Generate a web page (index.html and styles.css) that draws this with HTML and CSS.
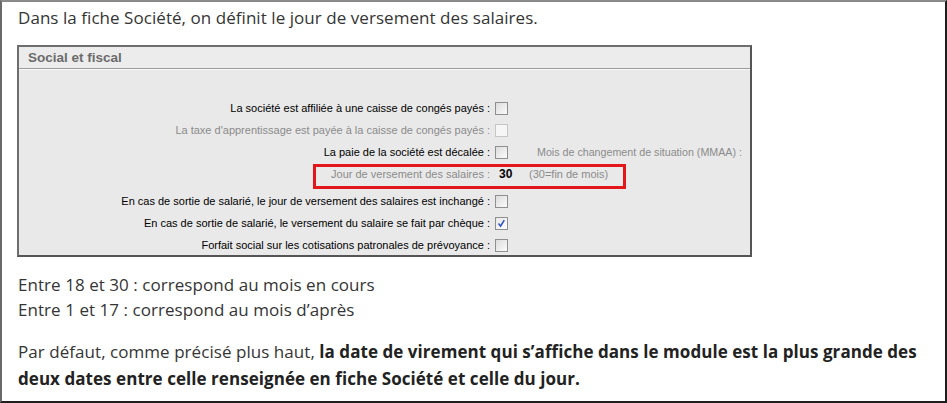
FILE: index.html
```html
<!DOCTYPE html>
<html lang="fr">
<head>
<meta charset="utf-8">
<title>Social et fiscal</title>
<link rel="stylesheet" href="styles.css">
</head>
<body>
<div class="frame">
  <p class="intro">Dans la fiche Société, on définit le jour de versement des salaires.</p>
  <div class="shot">
    <div class="shot-head">Social et fiscal</div>
    <div class="shot-body">
      <div class="row">
        <span class="label">La société est affiliée à une caisse de congés payés :</span>
        <span class="cb"></span>
      </div>
      <div class="row dim">
        <span class="label">La taxe d'apprentissage est payée à la caisse de congés payés :</span>
        <span class="cb cb-dis"></span>
      </div>
      <div class="row">
        <span class="label">La paie de la société est décalée :</span>
        <span class="cb"></span>
        <span class="extra dimtext">Mois de changement de situation (MMAA) :</span>
      </div>
      <div class="row row-pay dim">
        <span class="label">Jour de versement des salaires :</span>
        <span class="value">30</span>
        <span class="hint">(30=fin de mois)</span>
      </div>
      <div class="row">
        <span class="label">En cas de sortie de salarié, le jour de versement des salaires est inchangé :</span>
        <span class="cb"></span>
      </div>
      <div class="row">
        <span class="label">En cas de sortie de salarié, le versement du salaire se fait par chèque :</span>
        <span class="cb cb-on"><svg viewBox="0 0 13 13" width="11" height="11"><path d="M3 6.6 L5.4 9.6 L9.8 2.6" fill="none" stroke="#2b4fc4" stroke-width="1.8"/></svg></span>
      </div>
      <div class="row">
        <span class="label">Forfait social sur les cotisations patronales de prévoyance :</span>
        <span class="cb"></span>
      </div>
    </div>
    <div class="highlight"></div>
  </div>
  <div class="ranges">
    <p>Entre 18 et 30 : correspond au mois en cours</p>
    <p>Entre 1 et 17 : correspond au mois d’après</p>
  </div>
  <p class="note">Par défaut, comme précisé plus haut, <strong>la date de virement qui s’affiche dans le module est la plus grande des deux dates entre celle renseignée en fiche Société et celle du jour.</strong></p>
</div>
</body>
</html>
```
FILE: styles.css
```css
html, body {
  margin: 0;
  padding: 0;
  background: #ffffff;
}
.frame {
  width: 947px;
  height: 403px;
  box-sizing: border-box;
  border-style: solid;
  border-width: 2px;
  border-color: #8a8a8a #1e1e1e #1e1e1e #6a6a6a;
  padding: 4px 20px 0 16px;
  font-family: "Open Sans", "Liberation Sans", sans-serif;
  font-size: 17px;
  letter-spacing: 0.05px;
  color: #353535;
  overflow: hidden;
}
.intro {
  margin: 0;
  line-height: 24px;
}
.shot {
  position: relative;
  margin: 15px 0 0 -1px;
  width: 735px;
  height: 212px;
  box-sizing: border-box;
  border: 2px solid #6e6e6e;
  border-right-color: #555555;
  border-bottom-color: #555555;
  background: #e9e9e9;
  font-family: "Liberation Sans", Arial, sans-serif;
  font-size: 11px;
  letter-spacing: 0;
  color: #000000;
}
.shot-head {
  height: 21px;
  line-height: 22px;
  padding-left: 9px;
  font-family: "Liberation Sans", Arial, sans-serif;
  font-size: 13.5px;
  font-weight: bold;
  color: #6b6b6b;
  background: #ececec;
  border-bottom: 1px solid #9c9c9c;
  box-shadow: 0 1px 0 #f8f8f8;
}
.shot-body {
  padding-top: 28px;
}
.row {
  display: flex;
  align-items: center;
  height: 22px;
}
.row-pay {
  margin-bottom: 5px;
}
.label {
  width: 471px;
  flex: none;
  text-align: right;
  white-space: nowrap;
}
.dim .label,
.dimtext,
.hint {
  color: #8b8b8b;
}
.cb {
  flex: none;
  width: 13px;
  height: 13px;
  margin-left: 5px;
  box-sizing: border-box;
  border: 1px solid #8f8f8f;
  background: linear-gradient(135deg, #dcdcdc, #fbfbfb);
  display: flex;
  align-items: center;
  justify-content: center;
}
.cb-dis {
  border-color: #c6c6c6;
  background: #f6f6f6;
}
.cb-on {
  background: linear-gradient(135deg, #e6e6e6, #ffffff);
}
.extra {
  margin-left: 29px;
  font-size: 10.7px;
}
.value {
  width: 30px;
  margin-left: 9px;
  font-weight: bold;
  font-size: 12px;
  color: #000000;
}
.highlight {
  position: absolute;
  left: 294px;
  top: 117px;
  width: 313px;
  height: 25px;
  box-sizing: border-box;
  border: 3px solid #e3161b;
}
.ranges {
  margin-top: 15px;
}
.ranges p {
  margin: 0;
  line-height: 25px;
}
.note {
  margin: 16px 0 0;
  line-height: 27px;
}
.note strong {
  font-weight: bold;
  color: #222222;
}
```
